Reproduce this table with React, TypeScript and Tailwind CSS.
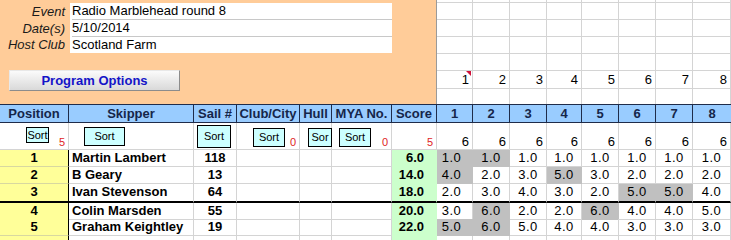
const COLS =
  "grid grid-cols-[69px_125px_43px_63px_32px_60px_45px_36px_37px_37px_35px_37px_37px_37px_38px]";
const RACE = "grid grid-cols-[36px_37px_37px_35px_37px_37px_37px_38px]";

const results = [
  { pos: 1, name: "Martin Lambert", sail: "118", score: "6.0", races: [1, 1, 1, 1, 1, 1, 1, 1], drops: [0, 1] },
  { pos: 2, name: "B Geary", sail: "13", score: "14.0", races: [4, 2, 3, 5, 3, 2, 2, 2], drops: [0, 3] },
  { pos: 3, name: "Ivan Stevenson", sail: "64", score: "18.0", races: [2, 3, 4, 3, 2, 5, 5, 4], drops: [5, 6] },
  { pos: 4, name: "Colin Marsden", sail: "55", score: "20.0", races: [3, 6, 2, 2, 6, 4, 4, 5], drops: [1, 4] },
  { pos: 5, name: "Graham Keightley", sail: "19", score: "22.0", races: [5, 6, 5, 4, 4, 3, 3, 3], drops: [0, 1] },
];

const headers = ["Position", "Skipper", "Sail #", "Club/City", "Hull", "MYA No.", "Score", "1", "2", "3", "4", "5", "6", "7", "8"];
const races = [1, 2, 3, 4, 5, 6, 7, 8];

const SortButton = ({ label = "Sort", className = "" }: { label?: string; className?: string }) => (
  <div
    className={`flex items-center justify-center bg-[#ccffff] border border-black text-[11px] leading-none text-black overflow-hidden whitespace-nowrap ${className}`}
  >
    {label}
  </div>
);

const RedCount = ({ n }: { n: number }) => (
  <span className="absolute right-[3px] bottom-[1px] text-[11px] leading-none text-[#e02424]">{n}</span>
);

export default function App() {
  return (
    <div className="w-[731px] h-[240px] overflow-hidden bg-white text-black font-['Liberation_Sans',Arial,sans-serif]">
      {/* top panel */}
      <div className="flex h-[104px]">
        <div className="w-[437px] bg-[#ffcc99] border-r border-[#9a9a9a] pt-[3px]">
          <div className="flex">
            <div className="w-[70px] text-right pr-[5px] italic text-[13px] text-[#1a1a1a]">
              <div className="h-[17px] leading-[17px]">Event</div>
              <div className="h-[17px] leading-[17px]">Date(s)</div>
              <div className="h-[16px] leading-[16px]">Host Club</div>
            </div>
            <div className="w-[322px] bg-white text-[13px] pl-[2px]">
              <div className="h-[17px] leading-[16px] border-b border-[#c8c8c8]">Radio Marblehead round 8</div>
              <div className="h-[17px] leading-[16px] border-b border-[#c8c8c8]">5/10/2014</div>
              <div className="h-[16px] leading-[16px]">Scotland Farm</div>
            </div>
          </div>
          <button className="mt-[17px] ml-[9px] w-[171px] h-[21px] bg-gradient-to-b from-[#fbfbfb] to-[#d9d9d9] border border-t-[#e8e8e8] border-l-[#e8e8e8] border-r-[#8c8c8c] border-b-[#8c8c8c] text-[13px] font-bold text-[#1414c8] leading-none">
            Program Options
          </button>
        </div>
        <div className="flex-1 flex flex-col">
          <div className={`${RACE} h-[3px]`}>
            {races.map((r) => (
              <div key={r} className="border-r border-b border-[#d4d4d4]" />
            ))}
          </div>
          {[0, 1, 2, 3, 4, 5].map((row) => (
            <div key={row} className={`${RACE} ${row === 5 ? "h-[16px]" : "h-[17px]"}`}>
              {races.map((r) => (
                <div
                  key={r}
                  className={`relative border-r border-[#d4d4d4] ${row === 5 ? "" : "border-b"} text-[13px] text-right pr-[3px] leading-[17px]`}
                >
                  {row === 4 ? r : ""}
                  {row === 4 && r === 1 && (
                    <span className="absolute top-0 right-[1px] w-0 h-0 border-t-[5px] border-l-[5px] border-t-[#d0103a] border-l-transparent" />
                  )}
                </div>
              ))}
            </div>
          ))}
        </div>
      </div>

      {/* header */}
      <div className={`${COLS} h-[19px] bg-[#99ccff] border-y border-[#1f2c4a]`}>
        {headers.map((h, i) => (
          <div
            key={h}
            className={`text-center text-[13px] font-bold text-[#15264a] leading-[17px] whitespace-nowrap overflow-hidden ${i < headers.length - 1 ? "border-r border-[#1f2c4a]" : ""}`}
          >
            {h}
          </div>
        ))}
      </div>

      {/* sort row */}
      <div className={`${COLS} h-[27px]`}>
        <div className="relative border-r border-b border-[#d4d4d4]">
          <SortButton className="mt-[4px] ml-[26px] w-[23px] h-[16px]" />
          <RedCount n={5} />
        </div>
        <div className="border-r border-b border-[#d4d4d4]">
          <SortButton className="mt-[4px] ml-[15px] w-[41px] h-[19px]" />
        </div>
        <div className="border-r border-b border-[#d4d4d4]">
          <SortButton className="mt-[2px] ml-[3px] w-[34px] h-[23px]" />
        </div>
        <div className="relative border-r border-b border-[#d4d4d4]">
          <SortButton className="mt-[5px] ml-[16px] w-[32px] h-[19px]" />
          <RedCount n={0} />
        </div>
        <div className="border-r border-b border-[#d4d4d4]">
          <SortButton label="Sor" className="mt-[5px] ml-[8px] w-[24px] h-[19px]" />
        </div>
        <div className="relative border-r border-b border-[#d4d4d4]">
          <SortButton className="mt-[5px] ml-[7px] w-[32px] h-[19px]" />
          <RedCount n={0} />
        </div>
        <div className="relative border-r border-b border-[#d4d4d4]">
          <RedCount n={5} />
        </div>
        {races.map((r) => (
          <div key={r} className="flex items-end justify-end pr-[3px] pb-[1px] border-r border-b border-[#d4d4d4] text-[13px] leading-none">
            6
          </div>
        ))}
      </div>

      {/* results */}
      {results.map((res) => {
        const thick = res.pos === 3;
        const h = thick ? "h-[19px]" : res.pos === 4 ? "h-[16px]" : "h-[17px]";
        const bottom = thick ? "border-b-2 border-b-black" : "border-b";
        return (
          <div key={res.pos} className={`${COLS} ${h} text-[13px] leading-[16px]`}>
            <div className={`bg-[#ffff99] text-center font-bold border-r border-r-black ${bottom} ${thick ? "" : "border-b-[#d8d8a0]"}`}>
              {res.pos}
            </div>
            <div className={`pl-[3px] font-bold whitespace-nowrap border-r border-[#d4d4d4] ${bottom}`}>{res.name}</div>
            <div className={`text-center font-bold border-r border-[#d4d4d4] ${bottom}`}>{res.sail}</div>
            <div className={`border-r border-[#d4d4d4] ${bottom}`} />
            <div className={`border-r border-[#d4d4d4] ${bottom}`} />
            <div className={`border-r border-[#d4d4d4] ${bottom}`} />
            <div className={`bg-[#ccffcc] text-right pr-[12px] font-bold border-r border-r-[#ccffcc] ${bottom} ${thick ? "" : "border-b-[#ccffcc]"}`}>
              {res.score}
            </div>
            {res.races.map((v, i) => {
              const dropped = res.drops.includes(i);
              return (
                <div
                  key={i}
                  className={`text-center tracking-[0.5px] ${i === 0 ? "pr-[6px]" : ""} ${
                    dropped ? "bg-[#c0c0c0] border-r border-r-[#c0c0c0]" : "border-r border-r-[#d4d4d4]"
                  } ${bottom} ${thick ? "" : dropped ? "border-b-[#c0c0c0]" : "border-b-[#d4d4d4]"}`}
                >
                  {v.toFixed(1)}
                </div>
              );
            })}
          </div>
        );
      })}

      {/* next (empty) row */}
      <div className={`${COLS} h-[17px]`}>
        <div className="bg-[#ffff99] border-r border-r-black" />
        <div className="border-r border-[#d4d4d4]" />
        <div className="border-r border-[#d4d4d4]" />
        <div className="border-r border-[#d4d4d4]" />
        <div className="border-r border-[#d4d4d4]" />
        <div className="border-r border-[#d4d4d4]" />
        <div className="bg-[#ccffcc]" />
        {races.map((r) => (
          <div key={r} className="border-r border-[#d4d4d4]" />
        ))}
      </div>
    </div>
  );
}
